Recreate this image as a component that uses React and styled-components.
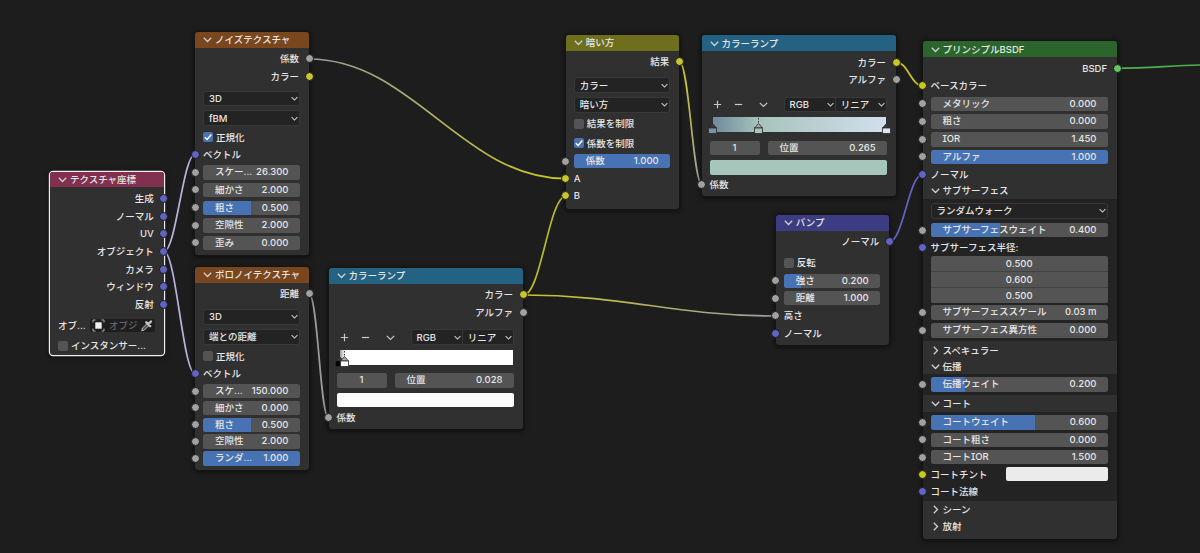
import React from 'react';
import styled, { createGlobalStyle } from 'styled-components';

const GlobalStyle = createGlobalStyle`
  body {
    margin: 0;
    background: #1d1d1d;
    overflow: hidden;
  }
`;

const SOCKET = {
  gray: '#a1a1a1',
  yellow: '#c7c729',
  purple: '#6363c7',
  green: '#63c763',
};

const Chevron = ({ right, size = 9 }) => (
  <ChevronIcon width={size} height={size} viewBox="0 0 9 9" $right={right}>
    <path d="M.8 2.800l3.700 3.700L8.200 2.800" />
  </ChevronIcon>
);

const Row = ({ gap, left, right, children }) => (
  <RowBox $gap={gap}>
    {left && <Socket $color={SOCKET[left]} $side="left" />}
    {children}
    {right && <Socket $color={SOCKET[right]} $side="right" />}
  </RowBox>
);

const Output = ({ label, color, gap }) => (
  <Row gap={gap} right={color}>
    <OutputLabel>{label}</OutputLabel>
  </Row>
);

const Input = ({ label, color, gap }) => (
  <Row gap={gap} left={color}>
    <InputLabel>{label}</InputLabel>
  </Row>
);

const Value = ({ label, value, fill = 0, gap, socket = 'gray' }) => (
  <Row gap={gap} left={socket}>
    <Field $fill={fill}>
      <span>{label}</span>
      <span>{value}</span>
    </Field>
  </Row>
);

const Select = ({ label, gap }) => (
  <Row gap={gap}>
    <Dropdown>
      {label}
      <Chevron size={7} />
    </Dropdown>
  </Row>
);

const Check = ({ label, checked, gap }) => (
  <Row gap={gap}>
    <CheckBox $checked={checked}>
      {checked && (
        <svg width="10" height="10" viewBox="0 0 10 10">
          <path d="M1.8 5.2l2.3 2.3L8.3 2.4" fill="none" stroke="#fff" strokeWidth="1.5" />
        </svg>
      )}
    </CheckBox>
    <span>{label}</span>
  </Row>
);

const Node = ({ x, y, w, h, title, color, selected, children }) => (
  <NodeBox $x={x} $y={y} $w={w} $h={h} $selected={selected}>
    <Header $color={color}>
      <Chevron />
      {title}
    </Header>
    {children}
  </NodeBox>
);

const Stop = ({ at, color, active }) => (
  <StopMark $at={at} width="9" height="16" viewBox="0 0 9 16">
    {active && <path d="M4.5 0v6" stroke="#333" strokeDasharray="1.5 1.5" />}
    <path d="M.5 10L4.5 5.500l4 4.500z" fill={active ? '#a8a8a8' : '#3a3a3a'} stroke="#2a2a2a" strokeWidth=".8" />
    <rect x=".5" y="10" width="8" height="5.5" fill={color} stroke="#2a2a2a" strokeWidth=".8" />
  </StopMark>
);

const ColorRamp = ({ x, y, gradient, stops, position, swatch }) => (
  <Node x={x} y={y} w={194.5} h={161} title="カラーランプ" color="#246283">
    <Output label="カラー" color="yellow" gap={3.6} />
    <Output label="アルファ" color="gray" gap={2.5} />
    <Row gap={9.9}>
      <RampTools>
        <svg width="9" height="9" viewBox="0 0 9 9"><path d="M4.5 .8v7.4M.8 4.5h7.4" /></svg>
        <svg width="9" height="9" viewBox="0 0 9 9"><path d="M.8 4.5h7.4" /></svg>
        <Chevron />
      </RampTools>
      <Joined>
        <Dropdown>RGB<Chevron size={7} /></Dropdown>
        <Dropdown>リニア<Chevron size={7} /></Dropdown>
      </Joined>
    </Row>
    <Row gap={5}>
      <RampBar $gradient={gradient}>
        {stops.map((s) => <Stop key={s.at} {...s} />)}
      </RampBar>
    </Row>
    <Row gap={8.3}>
      <Index>1</Index>
      <Field $fill={0}>
        <span>位置</span>
        <span>{position}</span>
      </Field>
    </Row>
    <Row gap={4.6}>
      <Swatch $color={swatch} />
    </Row>
    <Input label="係数" color="gray" gap={2.3} />
  </Node>
);

const PanelTitle = ({ label, h, closed }) => (
  <PanelHeader $h={h}>
    <Chevron right={closed} />
    {label}
  </PanelHeader>
);

const Wires = () => (
  <WireLayer width="1200" height="553">
    <defs>
      <linearGradient id="grayYellow" gradientUnits="userSpaceOnUse" x1="309" y1="0" x2="566" y2="0">
        <stop offset="0" stopColor="#9c9c9c" />
        <stop offset="1" stopColor="#c7c729" />
      </linearGradient>
      <linearGradient id="yellowGray" gradientUnits="userSpaceOnUse" x1="523" y1="0" x2="776" y2="0">
        <stop offset="0" stopColor="#c7c729" />
        <stop offset="1" stopColor="#9c9c9c" />
      </linearGradient>
      <linearGradient id="resultDown" gradientUnits="userSpaceOnUse" x1="0" y1="62" x2="0" y2="185">
        <stop offset="0" stopColor="#c7c729" />
        <stop offset="1" stopColor="#9c9c9c" />
      </linearGradient>
    </defs>
    <path d="M309 59C412 59 463 178.700 566 178.700" stroke="url(#grayYellow)" />
    <path d="M309 294C318 294 320 417.500 328.500 417.500" stroke="#9c9c9c" />
    <path d="M523.500 295C541 295 549 196 566 196" stroke="#b9b92a" />
    <path d="M523.500 295C625 295 675 316 776 316" stroke="url(#yellowGray)" />
    <path d="M679.500 62C689 62 693 184.700 702 184.700" stroke="url(#resultDown)" />
    <path d="M897 62.300C907 62.300 912 86 922.500 86" stroke="#c7c729" />
    <path d="M889.500 241.700C903 241.700 909 174.300 922.500 174.300" stroke="#6363c7" />
    <path d="M1117.500 68.300C1150 68.300 1170 65.500 1200 65" stroke="#4fb04f" />
    <path d="M164 251.500C176 251.500 183 154.500 195 154.500" stroke="#b9b3dc" />
    <path d="M164 251.500C176 251.500 183 373.500 195 373.500" stroke="#b9b3dc" />
  </WireLayer>
);

export default function App() {
  return (
    <Canvas>
      <GlobalStyle />
      <Wires />

      <Node x={50} y={171.700} w={113.800} h={183} title="テクスチャ座標" color="#82304f" selected>
        <Output label="生成" color="purple" gap={3.7} />
        <Output label="ノーマル" color="purple" />
        <Output label="UV" color="purple" />
        <Output label="オブジェクト" color="purple" />
        <Output label="カメラ" color="purple" />
        <Output label="ウィンドウ" color="purple" />
        <Output label="反射" color="purple" />
        <Row gap={6.2}>
          <ObjectLabel>オブ...</ObjectLabel>
          <ObjectPicker>
            <svg width="13" height="13" viewBox="0 0 13 13">
              <path d="M1 3.500V1h2.500M9.500 1H12v2.500M12 9.500V12H9.500M3.500 12H1V9.500" fill="none" stroke="#aaa" />
              <rect x="3.300" y="3.300" width="6.400" height="6.400" fill="#eee" />
            </svg>
            <span>オブジ</span>
            <svg width="12" height="13" viewBox="0 0 12 12">
              <path d="M.7 11.300l.7-2.600 4.800-4.800 1.900 1.900-4.800 4.800z" fill="#555" stroke="#bbb" />
              <path d="M5.300 2.800l3.900 3.900M7.300 4.700l2.700-2.700" stroke="#c4c4c4" strokeWidth="2.400" strokeLinecap="round" />
            </svg>
          </ObjectPicker>
        </Row>
        <Check label="インスタンサー..." gap={5} />
      </Node>

      <Node x={195} y={32} w={114} h={222.500} title="ノイズテクスチャ" color="#79461d">
        <Output label="係数" color="gray" gap={3.7} />
        <Output label="カラー" color="yellow" />
        <Select label="3D" gap={7} />
        <Select label="fBM" gap={4.6} />
        <Check label="正規化" checked gap={3.9} />
        <Input label="ベクトル" color="purple" />
        <Value label="スケー..." value="26.300" />
        <Value label="細かさ" value="2.000" />
        <Value label="粗さ" value="0.500" fill={49} gap={3} />
        <Value label="空隙性" value="2.000" />
        <Value label="歪み" value="0.000" gap={2.4} />
      </Node>

      <Node x={195} y={267} w={114} h={203} title="ボロノイテクスチャ" color="#79461d">
        <Output label="距離" color="gray" gap={3.4} />
        <Select label="3D" gap={8.4} />
        <Select label="端との距離" gap={5} />
        <Check label="正規化" gap={4.5} />
        <Input label="ベクトル" color="purple" gap={2} />
        <Value label="スケ..." value="150.000" gap={2.6} />
        <Value label="細かさ" value="0.000" gap={1.8} />
        <Value label="粗さ" value="0.500" fill={49} gap={1.9} />
        <Value label="空隙性" value="2.000" gap={1.9} />
        <Value label="ランダ..." value="1.000" fill={100} gap={1.9} />
      </Node>

      <ColorRamp
        x={328.5}
        y={268}
        gradient="#999, #fff 2.8%, #fff"
        stops={[{ at: 0, color: '#000' }, { at: 2.8, color: '#fff', active: true }]}
        position="0.028"
        swatch="#ffffff"
      />

      <Node x={565.700} y={35} w={113.500} h={174} title="暗い方" color="#6e6e1d">
        <Output label="結果" color="yellow" gap={3.4} />
        <Select label="カラー" gap={8.6} />
        <Select label="暗い方" gap={4.6} />
        <Check label="結果を制限" gap={3.9} />
        <Check label="係数を制限" checked gap={4.5} />
        <Value label="係数" value="1.000" fill={100} gap={2.9} />
        <Input label="A" color="yellow" />
        <Input label="B" color="yellow" gap={2.3} />
      </Node>

      <ColorRamp
        x={701.600}
        y={35.300}
        gradient="#71899c, #a6c3bb 26.500%, #d3dfec"
        stops={[
          { at: 0, color: '#7b93a5' },
          { at: 26.5, color: '#a6c6bc', active: true },
          { at: 100, color: '#dde8f2' },
        ]}
        position="0.265"
        swatch="#a6c6bc"
      />

      <Node x={775.700} y={215} w={113.500} h={129.500} title="バンプ" color="#3c3c83">
        <Output label="ノーマル" color="purple" gap={3.4} />
        <Check label="反転" gap={6.3} />
        <Value label="強さ" value="0.200" fill={18} gap={3} />
        <Value label="距離" value="1.000" gap={2.3} />
        <Input label="高さ" color="gray" />
        <Input label="ノーマル" color="purple" />
      </Node>

      <Node x={922.500} y={41.300} w={194.500} h={498} title="プリンシプルBSDF" color="#2b652b">
        <Output label="BSDF" color="green" gap={3.6} />
        <Input label="ベースカラー" color="yellow" />
        <Value label="メタリック" value="0.000" gap={3.2} />
        <Value label="粗さ" value="0.000" gap={2.7} />
        <Value label="IOR" value="1.450" gap={2.7} />
        <Value label="アルファ" value="1.000" fill={100} gap={2.5} />
        <Input label="ノーマル" color="purple" gap={2.3} />
        <PanelTitle label="サブサーフェス" h={17} />
        <Panel $h={142.3}>
          <Select label="ランダムウォーク" gap={4.8} />
          <Value label="サブサーフェスウェイト" value="0.400" fill={39} gap={4.3} />
          <Input label="サブサーフェス半径:" color="purple" gap={2.4} />
          <Vector>
            <span>0.500</span>
            <span>0.600</span>
            <span>0.500</span>
          </Vector>
          <Value label="サブサーフェススケール" value="0.03 m" />
          <Value label="サブサーフェス異方性" value="0.000" />
        </Panel>
        <Spacer />
        <PanelTitle label="スペキュラー" h={15.5} closed />
        <PanelTitle label="伝播" h={15.5} />
        <Panel $h={21.5}>
          <Value label="伝播ウェイト" value="0.200" fill={19} gap={3} />
        </Panel>
        <PanelTitle label="コート" h={17} />
        <Panel $h={88.800}>
          <Value label="コートウェイト" value="0.600" fill={59} gap={2.8} />
          <Value label="コート粗さ" value="0.000" gap={2.2} />
          <Value label="コートIOR" value="1.500" gap={2.3} />
          <Row left="yellow" gap={2.3}>
            <InputLabel>コートチント</InputLabel>
            <TintSwatch />
          </Row>
          <Input label="コート法線" color="purple" gap={1.8} />
        </Panel>
        <PanelTitle label="シーン" h={17.3} closed />
        <PanelTitle label="放射" h={16} closed />
      </Node>
    </Canvas>
  );
}

const Canvas = styled.div`
  position: relative;
  width: 1200px;
  height: 553px;
  overflow: hidden;
  background: #1d1d1d;
  color: #e6e6e6;
  font-family: Inter, 'Noto Sans CJK JP', sans-serif;
  font-size: 9.5px;
  font-weight: 500;
  font-feature-settings: 'cv08' 1;
  line-height: 15px;
  white-space: nowrap;
`;

const WireLayer = styled.svg`
  position: absolute;
  inset: 0;

  path {
    fill: none;
    stroke-width: 1.7;
  }
`;

const NodeBox = styled.section`
  position: absolute;
  left: ${(p) => p.$x}px;
  top: ${(p) => p.$y}px;
  width: ${(p) => p.$w}px;
  height: ${(p) => p.$h}px;
  background: #303030;
  border-radius: 3px;
  box-shadow: ${(p) => (p.$selected ? '0 0 0 1.2px #eee' : '0 0 0 1px #151515')}, 0 1px 5px 1px rgba(0, 0, 0, 0.6);
`;

const Header = styled.header`
  display: flex;
  align-items: center;
  gap: 3px;
  height: 15.7px;
  padding-left: 8px;
  border-radius: 3px 3px 0 0;
  background: ${(p) => p.$color};
`;

const ChevronIcon = styled.svg`
  flex: none;
  transform: ${(p) => (p.$right ? 'rotate(-90deg)' : 'none')};

  path {
    fill: none;
    stroke: #d0d0d0;
    stroke-width: 1.3;
  }
`;

const RowBox = styled.div`
  position: relative;
  display: flex;
  align-items: center;
  height: 15px;
  margin-top: ${(p) => p.$gap ?? 2.65}px;
  padding: 0 9px 0 8px;
`;

const Socket = styled.i`
  position: absolute;
  top: 3px;
  ${(p) => p.$side}: -4.500px;
  width: 7px;
  height: 7px;
  border: 1px solid #1a1a1a;
  border-radius: 50%;
  background: ${(p) => p.$color};
`;

const OutputLabel = styled.span`
  margin-left: auto;
  padding-right: 1px;
`;

const InputLabel = styled.span`
  flex: 1;
`;

const Field = styled.div`
  flex: 1;
  display: flex;
  justify-content: space-between;
  height: 14.500px;
  line-height: 14.500px;
  padding: 0 11.500px 0 12px;
  border-radius: 2.500px;
  background: linear-gradient(90deg, #4772b3 ${(p) => p.$fill}%, #545454 ${(p) => p.$fill}%);
`;

const Dropdown = styled.div`
  flex: 1;
  display: flex;
  align-items: center;
  justify-content: space-between;
  box-sizing: border-box;
  height: 15.500px;
  padding: 0 1px 0 5px;
  border: 1px solid #383838;
  border-radius: 3px;
  background: #232323;
`;

const Joined = styled.div`
  display: flex;
  width: 103.500px;
  margin-left: auto;

  ${Dropdown}:first-child {
    border-radius: 3px 0 0 3px;
  }

  ${Dropdown}:last-child {
    margin-left: -1px;
    border-radius: 0 3px 3px 0;
  }
`;

const CheckBox = styled.span`
  display: flex;
  width: 10px;
  height: 10px;
  margin-right: 3px;
  border-radius: 2px;
  background: ${(p) => (p.$checked ? '#4772b3' : '#545454')};
`;

const ObjectLabel = styled.span`
  width: 32px;
`;

const ObjectPicker = styled.div`
  flex: 1;
  display: flex;
  align-items: center;
  gap: 4px;
  height: 13.500px;
  padding: 0 2px;
  border-radius: 2px;
  background: #1e1e1e;
  color: #666;

  span {
    flex: 1;
    width: 0;
    overflow: hidden;
  }

  svg {
    flex: none;
  }
`;

const RampTools = styled.div`
  display: flex;
  align-items: center;
  gap: 12.500px;
  padding-left: 3px;

  path {
    fill: none;
    stroke: #c8c8c8;
    stroke-width: 1.200;
  }

  ${ChevronIcon} {
    margin-left: 3px;
  }
`;

const RampBar = styled.div`
  position: relative;
  flex: 1;
  height: 15px;
  margin: 0 1px 0 3px;
  background: linear-gradient(90deg, ${(p) => p.$gradient});
`;

const StopMark = styled.svg`
  position: absolute;
  top: 1px;
  left: calc(${(p) => p.$at}% - 4.500px);
`;

const Index = styled.div`
  width: 50px;
  height: 14.500px;
  margin-right: 8px;
  border-radius: 2.500px;
  background: #545454;
  line-height: 14.500px;
  text-align: center;
`;

const Swatch = styled.div`
  flex: 1;
  height: 14.500px;
  border-radius: 2px;
  background: ${(p) => p.$color};
`;

const TintSwatch = styled.div`
  width: 102px;
  height: 14px;
  border-radius: 2px;
  background: #ebebeb;
`;

const PanelHeader = styled.div`
  display: flex;
  align-items: center;
  gap: 3px;
  height: ${(p) => p.$h}px;
  padding-left: 8px;
`;

const Panel = styled.div`
  display: flow-root;
  height: ${(p) => p.$h}px;
  background: #232323;
`;

const Spacer = styled.div`
  height: 2px;
`;

const Vector = styled.div`
  display: flex;
  flex-direction: column;
  gap: 1px;
  height: 46.500px;
  margin: 1px 9px 0 8px;
  border-radius: 2.500px;
  background: #414141;
  overflow: hidden;
  text-align: center;

  span {
    flex: 1;
    background: #545454;
  }
`;
